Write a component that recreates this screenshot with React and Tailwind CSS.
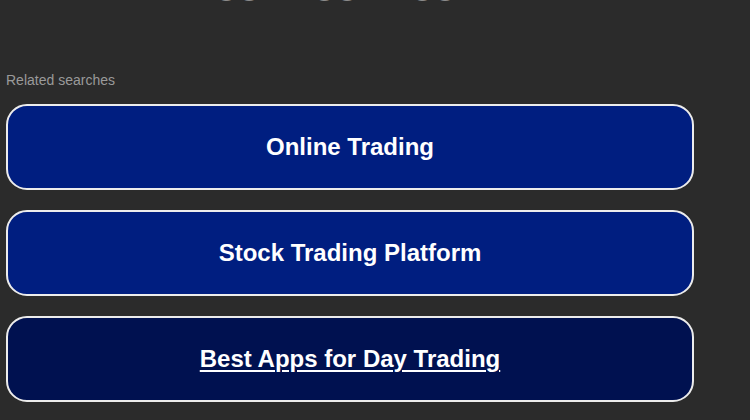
export default function App() {
  const items = [
    { label: "Online Trading", bg: "bg-[#001e80]", underline: false },
    { label: "Stock Trading Platform", bg: "bg-[#001e80]", underline: false },
    { label: "Best Apps for Day Trading", bg: "bg-[#001150]", underline: true },
  ];
  return (
    <div
      className="w-[750px] h-[420px] overflow-hidden bg-[#2b2b2b]"
      style={{ fontFamily: '"Liberation Sans", Arial, sans-serif' }}
    >
      <div className="h-[3px] overflow-hidden">
        <div className="flex gap-[52px] pl-[215px] mt-[-33px] text-[41px] leading-none font-bold text-[#8a8a8a]">
          <span className="w-[46px]">00</span>
          <span className="w-[46px]">00</span>
          <span className="w-[46px]">00</span>
        </div>
      </div>
      <div className="px-[6px] pt-[67px]">
        <div className="text-[14px] leading-[20px] text-[#9a9a9a]">Related searches</div>
        <div className="mt-[14px] flex flex-col gap-[20px] w-[688px]">
          {items.map((it) => (
            <a
              key={it.label}
              href="#"
              className={`${it.bg} h-[86px] rounded-[21px] border-2 border-[#ececec] flex items-center justify-center text-white font-bold text-[24px] ${it.underline ? "underline decoration-2 underline-offset-[3px]" : "no-underline"}`}
            >
              {it.label}
            </a>
          ))}
        </div>
      </div>
    </div>
  );
}
